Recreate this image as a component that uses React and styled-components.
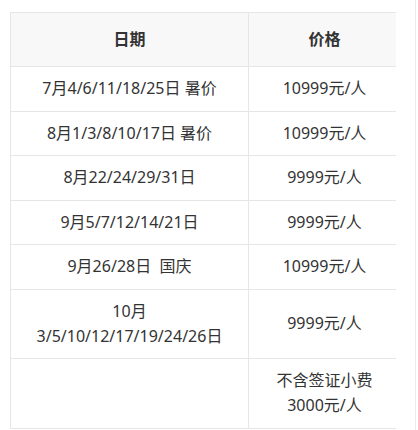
import React from "react";
import styled, { createGlobalStyle } from "styled-components";

const rows = [
  { date: "7月4/6/11/18/25日 暑价", price: "10999元/人" },
  { date: "8月1/3/8/10/17日 暑价", price: "10999元/人" },
  { date: "8月22/24/29/31日", price: "9999元/人" },
  { date: "9月5/7/12/14/21日", price: "9999元/人" },
  { date: "9月26/28日\u00a0\u00a0国庆", price: "10999元/人" },
  { date: "10月\n3/5/10/12/17/19/24/26日", price: "9999元/人" },
  { date: "", price: "不含签证小费\n3000元/人" },
];

const App = () => {
  return (
    <Page>
      <GlobalStyle />
      <Viewport>
        <Table>
          <colgroup>
            <col style={{ width: 238 }} />
            <col style={{ width: 152 }} />
          </colgroup>
          <thead>
            <tr>
              <Th>日期</Th>
              <Th>价格</Th>
            </tr>
          </thead>
          <tbody>
            {rows.map((r) => (
              <tr key={r.price + r.date}>
                <Td>{r.date}</Td>
                <Td>{r.price}</Td>
              </tr>
            ))}
          </tbody>
        </Table>
      </Viewport>
    </Page>
  );
};

export default App;

const GlobalStyle = createGlobalStyle`
  body {
    margin: 0;
    background: #fff;
    font-family: "Noto Sans", "Noto Sans CJK SC", sans-serif;
    color: #333;
  }
`;

const Page = styled.div`
  width: 416px;
  height: 430px;
  box-sizing: border-box;
  padding: 12px 0 0 10px;
  border-right: 1px solid #ececec;
`;

const Viewport = styled.div`
  width: 386px;
  overflow: hidden;
`;

const Table = styled.table`
  width: 390px;
  table-layout: fixed;
  border-collapse: collapse;
  font-size: 16px;
`;

const Th = styled.th`
  background: #f8f8f8;
  border: 1px solid #e6e6e6;
  padding: 14px 10px;
  line-height: 25px;
  font-weight: bold;
  text-align: center;
`;

const Td = styled.td`
  border: 1px solid #e6e6e6;
  padding: 9.25px 10px;
  line-height: 25px;
  text-align: center;
  vertical-align: middle;
  white-space: pre-line;
`;
